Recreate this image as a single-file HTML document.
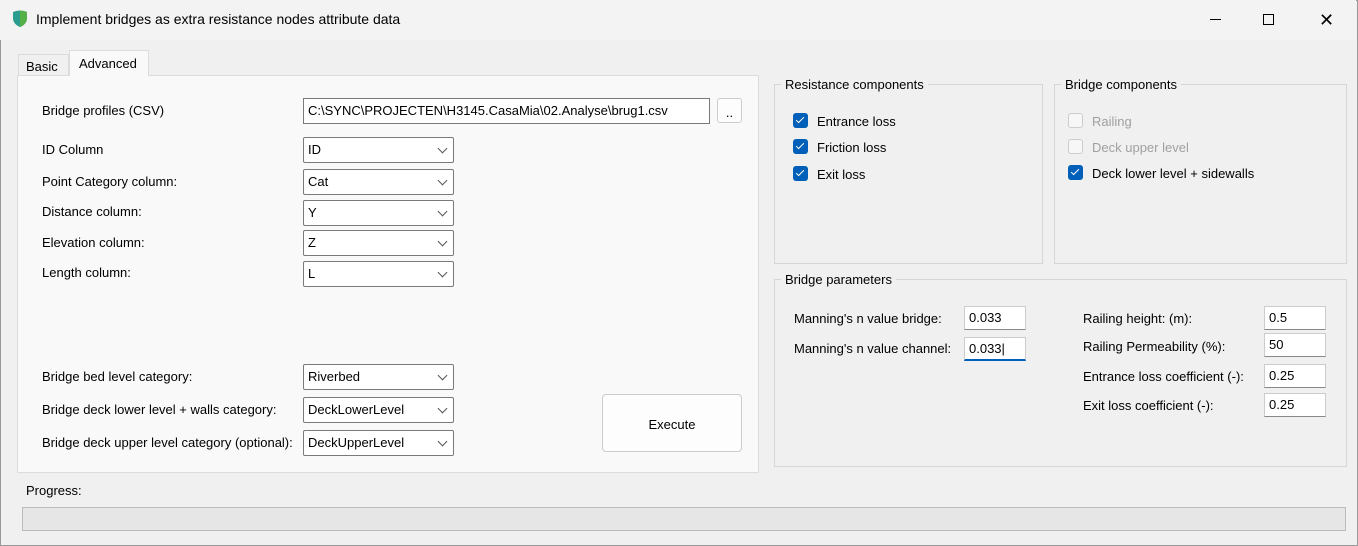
<!DOCTYPE html>
<html><head><style>
*{box-sizing:border-box;margin:0;padding:0}
body{width:1358px;height:546px;background:#f0f0f0;font-family:"Liberation Sans",sans-serif;font-size:13px;color:#000;position:relative;overflow:hidden}
.a{position:absolute;white-space:nowrap}
.win{position:absolute;left:0;top:0;width:1358px;height:546px;border:1px solid #999;background:#f0f0f0}
.title{position:absolute;left:0;top:0;width:1356px;height:40px;background:#f3f3f3}
.panel{position:absolute;left:17px;top:75px;width:742px;height:398px;background:#f9f9f9;border:1px solid #dcdcdc}
.tb{position:absolute;height:26px;background:#fff;border:1px solid #7a7a7a;padding:4px 4px;font-size:13px}
.cb{position:absolute;height:26px;background:#fff;border:1px solid #7a7a7a;padding:4px 4px;width:151px;border-radius:2px}
.cb:after{content:"";position:absolute;right:7px;top:7px;width:6px;height:6px;border-right:1px solid #555;border-bottom:1px solid #555;transform:rotate(45deg)}
.grp{position:absolute;border:1px solid #d6d6d6}
.grp span{position:absolute;left:6px;top:-8px;background:#f0f0f0;padding:0 4px}
.chk{position:absolute;width:15px;height:15px;border-radius:3px;background:#005fb8}
.chk:after{content:"";position:absolute;left:5px;top:2px;width:3px;height:7px;border-right:1.5px solid #fff;border-bottom:1.5px solid #fff;transform:rotate(45deg)}
.unc{position:absolute;width:15px;height:15px;border-radius:3px;border:1px solid #ccc;background:#f7f7f7}
.in{position:absolute;height:24px;width:62px;background:#fff;border:1px solid #ccc;border-bottom:1px solid #888;padding:3px 4px}
</style></head><body>
<div class="win"></div>
<div class="title"></div>
<svg class="a" style="left:12px;top:10px" width="16" height="18" viewBox="0 0 16 18"><path d="M1 2 Q8 -1 15 2 L15 8 Q15 14 8 17 Q1 14 1 8Z" fill="#2a9d8f"/><path d="M8 0.5 Q12 1 15 2 L15 8 Q15 14 8 17Z" fill="#55b04a"/></svg>
<div class="a" style="left:36px;top:11px;font-size:14px">Implement bridges as extra resistance nodes attribute data</div>
<div class="a" style="left:1210px;top:19px;width:11px;border-top:1px solid #000"></div>
<div class="a" style="left:1263px;top:14px;width:11px;height:11px;border:1px solid #000"></div>
<div class="a" style="left:1319px;top:10px;font-size:18px;font-weight:300">✕</div>

<div class="a" style="left:18px;top:54px;width:51px;height:22px;border:1px solid #dcdcdc;border-bottom:none;background:#f0f0f0;padding:4px 7px">Basic</div>
<div class="a" style="left:69px;top:50px;width:80px;height:26px;border:1px solid #dcdcdc;border-bottom:none;background:#f9f9f9;padding:5px 9px;z-index:2">Advanced</div>
<div class="panel"></div>

<div class="a" style="left:42px;top:103px">Bridge profiles (CSV)</div>
<div class="tb" style="left:303px;top:98px;width:407px">C:\SYNC\PROJECTEN\H3145.CasaMia\02.Analyse\brug1.csv</div>
<div class="a" style="left:717px;top:98px;width:25px;height:25px;border:1px solid #ccc;background:#fdfdfd;border-radius:3px;text-align:center;padding-top:6px">..</div>

<div class="a" style="left:42px;top:142px">ID Column</div><div class="cb" style="left:303px;top:137px">ID</div>
<div class="a" style="left:42px;top:174px">Point Category column:</div><div class="cb" style="left:303px;top:169px">Cat</div>
<div class="a" style="left:42px;top:204px">Distance column:</div><div class="cb" style="left:303px;top:200px">Y</div>
<div class="a" style="left:42px;top:235px">Elevation column:</div><div class="cb" style="left:303px;top:230px">Z</div>
<div class="a" style="left:42px;top:265px">Length column:</div><div class="cb" style="left:303px;top:261px">L</div>

<div class="a" style="left:42px;top:369px">Bridge bed level category:</div><div class="cb" style="left:303px;top:364px">Riverbed</div>
<div class="a" style="left:42px;top:402px">Bridge deck lower level + walls category:</div><div class="cb" style="left:303px;top:397px">DeckLowerLevel</div>
<div class="a" style="left:42px;top:435px">Bridge deck upper level category (optional):</div><div class="cb" style="left:303px;top:430px">DeckUpperLevel</div>
<div class="a" style="left:602px;top:394px;width:140px;height:58px;border:1px solid #ccc;border-radius:4px;background:#fdfdfd;text-align:center;padding-top:22px">Execute</div>

<div class="grp" style="left:774px;top:84px;width:269px;height:180px"><span>Resistance components</span></div>
<div class="chk" style="left:793px;top:113px"></div><div class="a" style="left:817px;top:114px">Entrance loss</div>
<div class="chk" style="left:793px;top:139px"></div><div class="a" style="left:817px;top:140px">Friction loss</div>
<div class="chk" style="left:793px;top:166px"></div><div class="a" style="left:817px;top:167px">Exit loss</div>

<div class="grp" style="left:1054px;top:84px;width:293px;height:180px"><span>Bridge components</span></div>
<div class="unc" style="left:1068px;top:113px"></div><div class="a" style="left:1092px;top:114px;color:#a0a0a0">Railing</div>
<div class="unc" style="left:1068px;top:139px"></div><div class="a" style="left:1092px;top:140px;color:#a0a0a0">Deck upper level</div>
<div class="chk" style="left:1068px;top:165px"></div><div class="a" style="left:1092px;top:166px">Deck lower level + sidewalls</div>

<div class="grp" style="left:774px;top:279px;width:573px;height:188px"><span>Bridge parameters</span></div>
<div class="a" style="left:794px;top:311px">Manning's n value bridge:</div><div class="in" style="left:964px;top:306px">0.033</div>
<div class="a" style="left:794px;top:341px">Manning's n value channel:</div><div class="in" style="left:964px;top:337px;border-bottom:2px solid #005fb8">0.033|</div>
<div class="a" style="left:1083px;top:311px">Railing height: (m):</div><div class="in" style="left:1264px;top:306px">0.5</div>
<div class="a" style="left:1083px;top:339px">Railing Permeability (%):</div><div class="in" style="left:1264px;top:333px">50</div>
<div class="a" style="left:1083px;top:369px">Entrance loss coefficient (-):</div><div class="in" style="left:1264px;top:364px">0.25</div>
<div class="a" style="left:1083px;top:398px">Exit loss coefficient (-):</div><div class="in" style="left:1264px;top:393px">0.25</div>

<div class="a" style="left:26px;top:483px">Progress:</div>
<div class="a" style="left:22px;top:507px;width:1324px;height:24px;background:#e6e6e6;border:1px solid #bcbcbc"></div>
</body></html>
